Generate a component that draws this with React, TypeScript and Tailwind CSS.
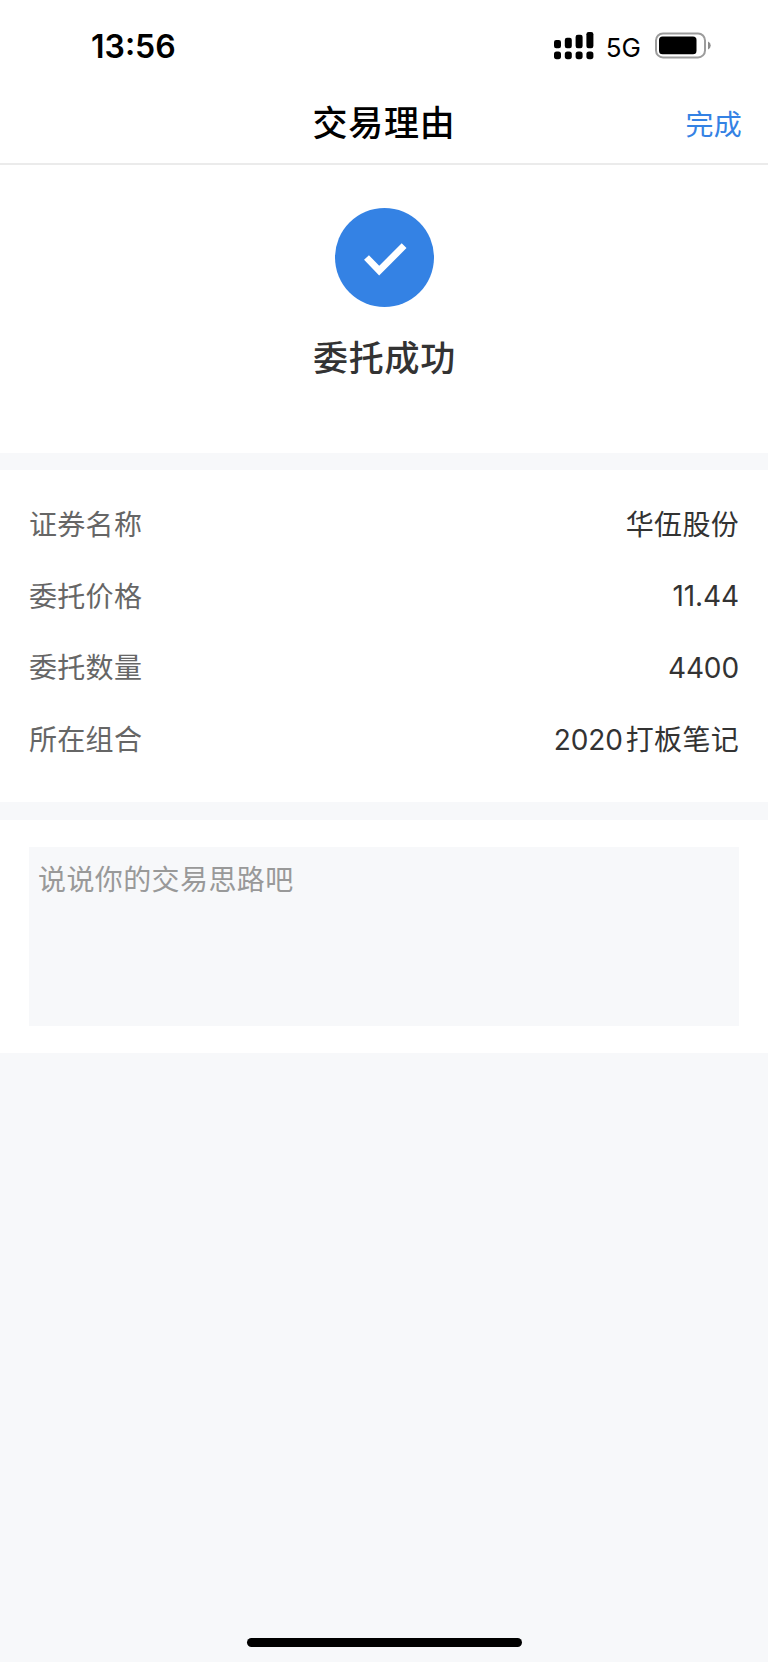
const details = [
  { label: "证券名称", value: "华伍股份" },
  { label: "委托价格", number: "11.44" },
  { label: "委托数量", number: "4400" },
  { label: "所在组合", number: "2020", value: "打板笔记" },
];

function StatusBar() {
  return (
    <div className="flex h-[88px] items-center pl-[91px] pr-[56px] pt-1 font-['Inter',sans-serif] text-black">
      <span className="pt-0.5 text-[32px] font-semibold leading-none">13:56</span>
      <svg className="ml-auto" width="40" height="28" viewBox="0 0 40 28">
        <rect x="0" y="8" width="7" height="8.2" rx="2.2" />
        <rect x="10.8" y="5.8" width="7" height="10.4" rx="2.2" />
        <rect x="21.6" y="2.8" width="7" height="13.4" rx="2.2" />
        <rect x="32.4" y="0" width="7" height="16.2" rx="2.2" />
        <rect x="0" y="19.4" width="7" height="7.8" rx="2.6" />
        <rect x="10.8" y="19.4" width="7" height="7.8" rx="2.6" />
        <rect x="21.6" y="19.4" width="7" height="7.8" rx="2.6" />
        <rect x="32.4" y="19.4" width="7" height="7.8" rx="2.6" />
      </svg>
      <span className="ml-3 pt-[3px] text-[26px] leading-none">5G</span>
      <svg className="ml-[13px]" width="58" height="28" viewBox="0 0 58 28">
        <rect x="2" y="1.4" width="49" height="24" rx="7" fill="none" stroke="#9c9c9c" strokeWidth="2" />
        <rect x="5" y="4.4" width="37.5" height="17.8" rx="3.5" />
        <path d="M54 9.4a4.3 4.3 0 0 1 0 8z" fill="#8c8c8c" />
      </svg>
    </div>
  );
}

export default function App() {
  return (
    <div className="flex h-[1662px] w-[768px] flex-col bg-[#f7f8fa] font-['Noto_Sans_CJK_SC',sans-serif]">
      <div className="bg-white">
        <StatusBar />

        {/* Nav bar */}
        <div className="grid h-[77px] grid-cols-[1fr_auto_1fr] items-center border-b-2 border-[#ebebeb] px-[26px]">
          <h1 className="col-start-2 pb-[11px] text-center text-[35px] font-medium leading-none tracking-[0.8px] text-black">
            交易理由
          </h1>
          <button className="pb-[5px] text-right text-[28px] leading-none tracking-[0.3px] text-[#3482e4]">
            完成
          </button>
        </div>
      </div>

      {/* Result */}
      <div className="flex h-[288px] flex-col items-center bg-white pt-[43px]">
        <svg width="99" height="99" viewBox="0 0 99 99">
          <circle cx="49.5" cy="49.5" r="49.5" fill="#3482e4" />
          <path d="M31.5 49.5l12.7 13.1 24.9-24.9" fill="none" stroke="#fff" strokeWidth="6.8" />
        </svg>
        <p className="mt-[31px] pl-px text-[35px] font-medium leading-none tracking-[0.8px] text-[#333]">
          委托成功
        </p>
      </div>

      {/* Order details */}
      <dl className="mt-[17px] h-[332px] bg-white px-[29px] pt-[17px]">
        {details.map((item) => (
          <div key={item.label} className="flex h-[71.8px] items-center justify-between text-[28px] leading-none tracking-[0.3px]">
            <dt className="text-[#666]">{item.label}</dt>
            <dd className="flex items-center gap-[3px] text-[#333]">
              {item.number && (
                <span className="pt-[3px] font-['Inter',sans-serif] text-[28px] tracking-[-0.1px]">{item.number}</span>
              )}
              {item.value && <span>{item.value}</span>}
            </dd>
          </div>
        ))}
      </dl>

      {/* Notes */}
      <div className="mt-[18px] bg-white px-[29px] py-[27px]">
        <textarea
          className="block h-[179px] w-full resize-none bg-[#f7f8fa] px-[9px] py-[13px] text-[28px] leading-9 tracking-[0.4px] outline-none placeholder:text-[#999]"
          placeholder="说说你的交易思路吧"
        />
      </div>

      <div className="mx-auto mb-[15px] mt-auto h-[9px] w-[275px] rounded-full bg-black" />
    </div>
  );
}
